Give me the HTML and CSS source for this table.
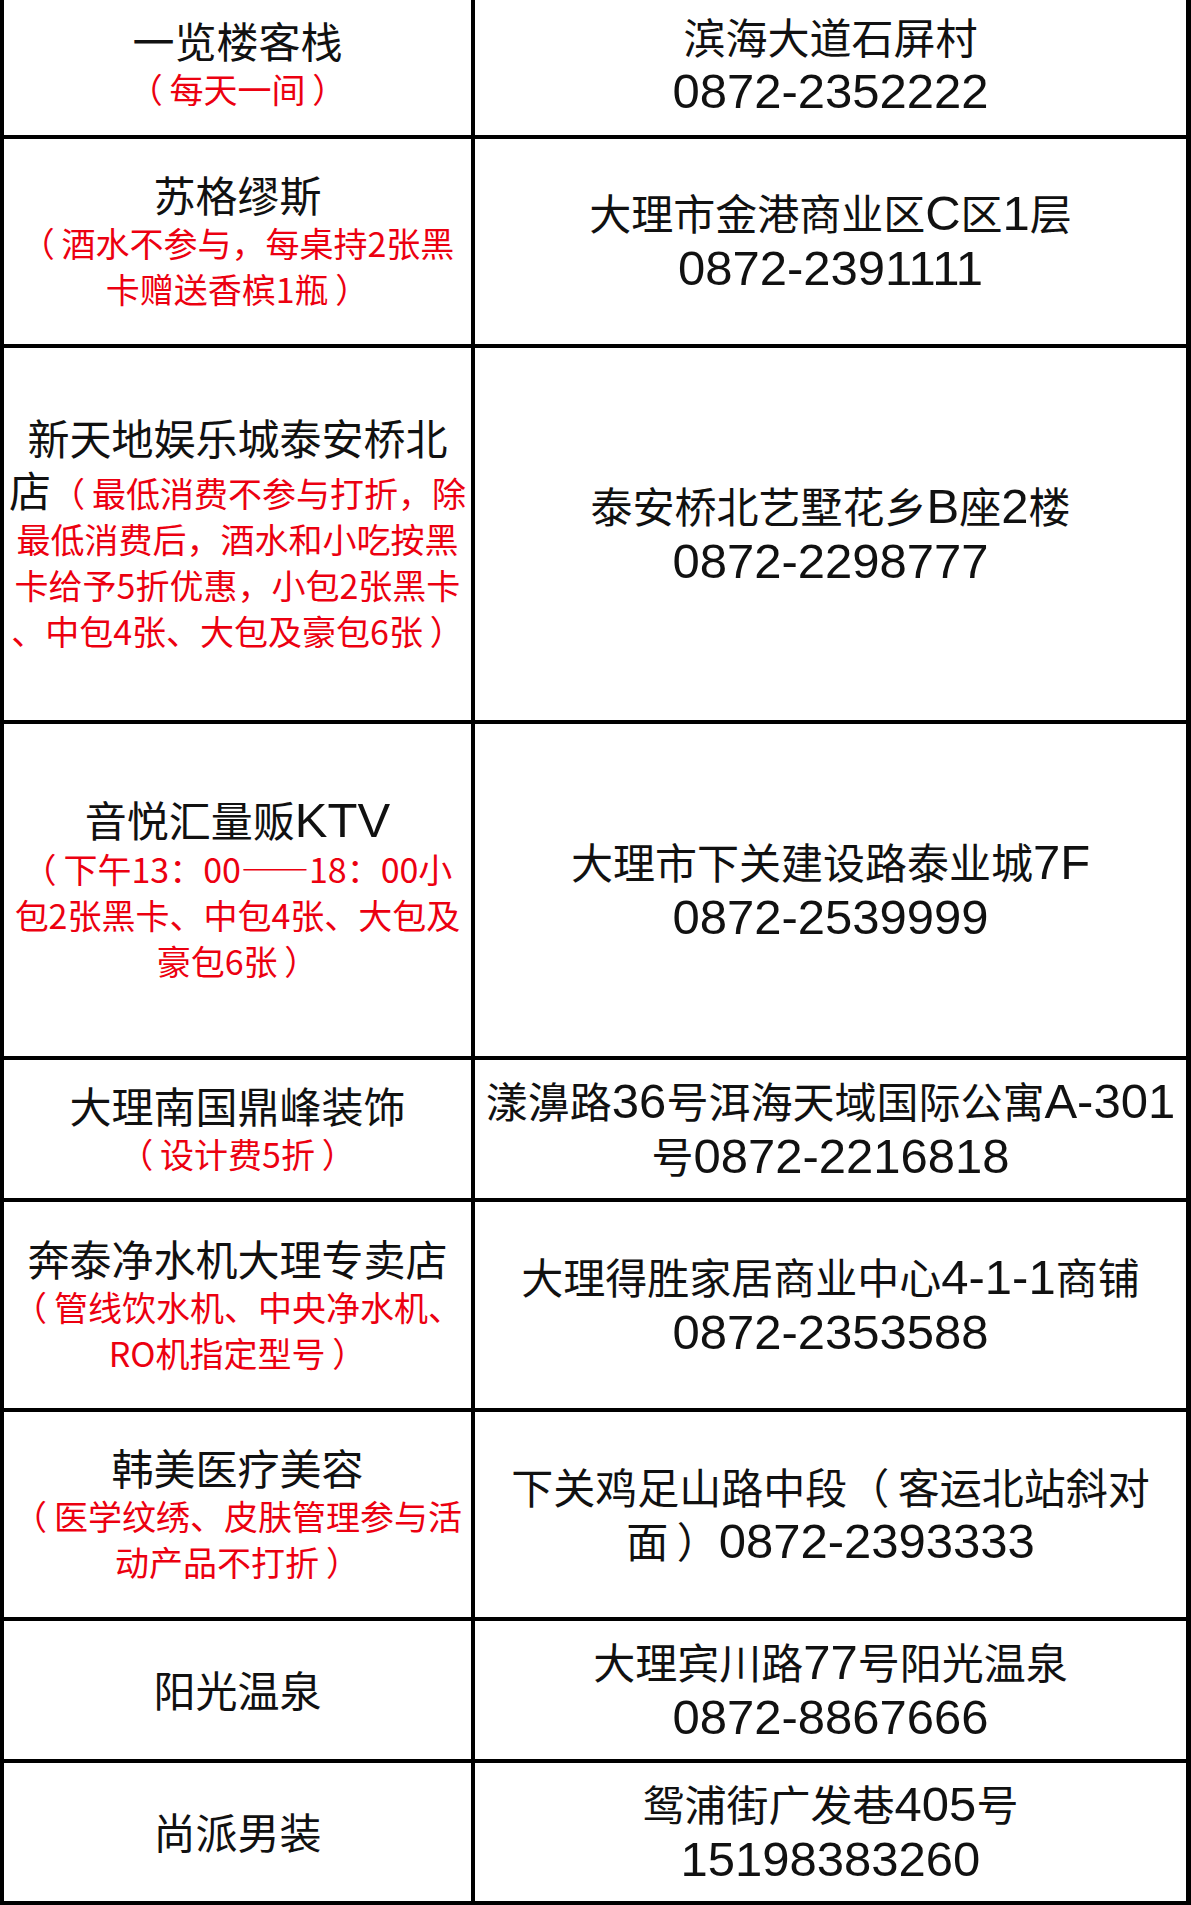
FILE: index.html
```html
<!DOCTYPE html>
<html lang="zh-CN">
<head>
<meta charset="utf-8">
<title>商家列表</title>
<link rel="stylesheet" href="styles.css">
</head>
<body>
<div class="sheet">
  <div class="cell shop first"><p class="name">一览楼客栈</p><p class="note"><span class="po">（</span>每天一间<span class="pc">）</span></p></div>
  <div class="cell addr first"><p>滨海大道石屏村</p><p><span class="n">0872-2352222</span></p></div>

  <div class="cell shop"><p class="name">苏格缪斯</p><p class="note"><span class="po">（</span>酒水不参与，每桌持2张黑<br>卡赠送香槟1瓶<span class="pc">）</span></p></div>
  <div class="cell addr"><p>大理市金港商业区<span class="n">C</span>区<span class="n">1</span>层</p><p><span class="n">0872-2391111</span></p></div>

  <div class="cell shop"><p class="name">新天地娱乐城泰安桥北</p><p class="name">店<span class="note-in"><span class="po">（</span>最低消费不参与打折，除</span></p><p class="note">最低消费后，酒水和小吃按黑<br>卡给予5折优惠，小包2张黑卡<br>、中包4张、大包及豪包6张<span class="pc">）</span></p></div>
  <div class="cell addr"><p>泰安桥北艺墅花乡<span class="n">B</span>座<span class="n">2</span>楼</p><p><span class="n">0872-2298777</span></p></div>

  <div class="cell shop"><p class="name">音悦汇量贩<span class="n">KTV</span></p><p class="note"><span class="po">（</span>下午13：00——18：00小<br>包2张黑卡、中包4张、大包及<br>豪包6张<span class="pc">）</span></p></div>
  <div class="cell addr"><p>大理市下关建设路泰业城<span class="n">7F</span></p><p><span class="n">0872-2539999</span></p></div>

  <div class="cell shop"><p class="name">大理南国鼎峰装饰</p><p class="note"><span class="po">（</span>设计费5折<span class="pc">）</span></p></div>
  <div class="cell addr"><p>漾濞路<span class="n">36</span>号洱海天域国际公寓<span class="n">A-301</span></p><p>号<span class="n">0872-2216818</span></p></div>

  <div class="cell shop"><p class="name">奔泰净水机大理专卖店</p><p class="note"><span class="po">（</span>管线饮水机、中央净水机、<br>RO机指定型号<span class="pc">）</span></p></div>
  <div class="cell addr"><p>大理得胜家居商业中心<span class="n">4-1-1</span>商铺</p><p><span class="n">0872-2353588</span></p></div>

  <div class="cell shop"><p class="name">韩美医疗美容</p><p class="note"><span class="po">（</span>医学纹绣、皮肤管理参与活<br>动产品不打折<span class="pc">）</span></p></div>
  <div class="cell addr"><p>下关鸡足山路中段<span class="po">（</span>客运北站斜对</p><p>面<span class="pc">）</span><span class="n">0872-2393333</span></p></div>

  <div class="cell shop"><p class="name">阳光温泉</p></div>
  <div class="cell addr"><p>大理宾川路<span class="n">77</span>号阳光温泉</p><p><span class="n">0872-8867666</span></p></div>

  <div class="cell shop"><p class="name">尚派男装</p></div>
  <div class="cell addr"><p>鸳浦街广发巷<span class="n">405</span>号</p><p><span class="n">15198383260</span></p></div>
</div>
</body>
</html>
```

FILE: styles.css
```css
html, body {
  margin: 0;
  padding: 0;
  background: #fff;
}

.sheet {
  box-sizing: border-box;
  width: 1191px;
  display: grid;
  grid-template-columns: 467px 711px;
  grid-template-rows: 135px 205px 372px 332px 138px 206px 205px 138px 138px;
  gap: 4px;
  padding: 0 5px 4px 4px;
  background: #000;
  font-family: "Noto Sans CJK SC", "Noto Sans", sans-serif;
  color: #111;
}

.cell {
  background: #fff;
  display: flex;
  flex-direction: column;
  justify-content: center;
  align-items: center;
  text-align: center;
  white-space: nowrap;
  padding-bottom: 3px;
}

.cell.first {
  padding-bottom: 9px;
}

.cell p {
  margin: 0;
}

.name {
  font-size: 42px;
  line-height: 52px;
}

.note,
.note-in {
  font-size: 34px;
  line-height: 46px;
  color: #ec0010;
}

.addr p {
  font-size: 42px;
  line-height: 54px;
}

/* extra breathing room inside full-width parentheses */
.po {
  margin-right: 0.2em;
}

.pc {
  margin-left: 0.2em;
}

.n {
  font-family: "Liberation Sans", Arial, sans-serif;
  font-size: 49px;
}
```
